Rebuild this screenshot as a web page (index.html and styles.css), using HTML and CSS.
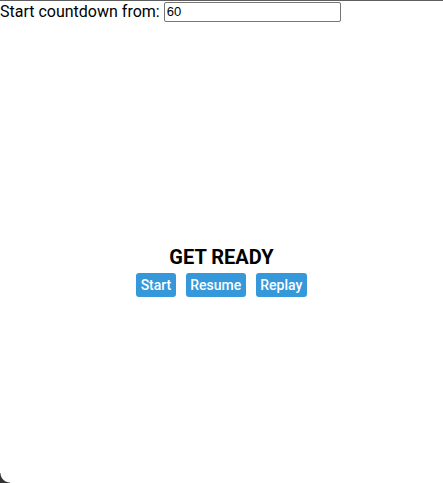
FILE: index.html
```html
<!DOCTYPE html>
<html>
<head>
<meta charset="utf-8">
<link rel="stylesheet" href="styles.css">
</head>
<body>
<div class="frame">
  <div class="controls">
    <label class="label" for="start">Start countdown from:</label>
    <input id="start" class="num" type="text" value="60">
  </div>
  <div class="stage">
    <div class="title">GET READY</div>
    <div class="buttons">
      <button class="btn">Start</button>
      <button class="btn">Resume</button>
      <button class="btn">Replay</button>
    </div>
  </div>
</div>
<div class="corner"></div>
</body>
</html>
```
FILE: styles.css
```css
html, body {
  margin: 0;
  padding: 0;
  background: #fff;
}
body {
  font-family: Roboto, "Liberation Sans", sans-serif;
  color: #000;
  height: 483px;
  overflow: hidden;
  position: relative;
}
.frame {
  border-top: 1px solid #5f5f5f;
  height: 482px;
  display: flex;
  flex-direction: column;
}
.controls {
  display: flex;
  align-items: center;
  gap: 4px;
  height: 21px;
  font-size: 16px;
}
.label {
  line-height: 19px;
}
.num {
  box-sizing: border-box;
  width: 177px;
  height: 20px;
  border: 1px solid #767676;
  border-radius: 2px;
  padding: 1px 2px;
  font-family: "Liberation Sans", Arial, sans-serif;
  font-size: 13px;
  margin: 0;
}
.stage {
  display: flex;
  flex-direction: column;
  align-items: center;
  padding-top: 223px;
}
.title {
  font-weight: bold;
  font-size: 20px;
  line-height: 24px;
}
.buttons {
  display: flex;
  gap: 10px;
  margin-top: 4px;
}
.btn {
  background: #3498db;
  color: #fff;
  border: none;
  border-radius: 3px;
  height: 24px;
  padding: 0 4.5px;
  font-family: Roboto, "Liberation Sans", sans-serif;
  font-weight: 500;
  font-size: 14px;
}
.corner {
  position: absolute;
  left: 0;
  bottom: 0;
  width: 10px;
  height: 10px;
  background: radial-gradient(circle at 10px 0, transparent 9px, #333 10px);
}
```
